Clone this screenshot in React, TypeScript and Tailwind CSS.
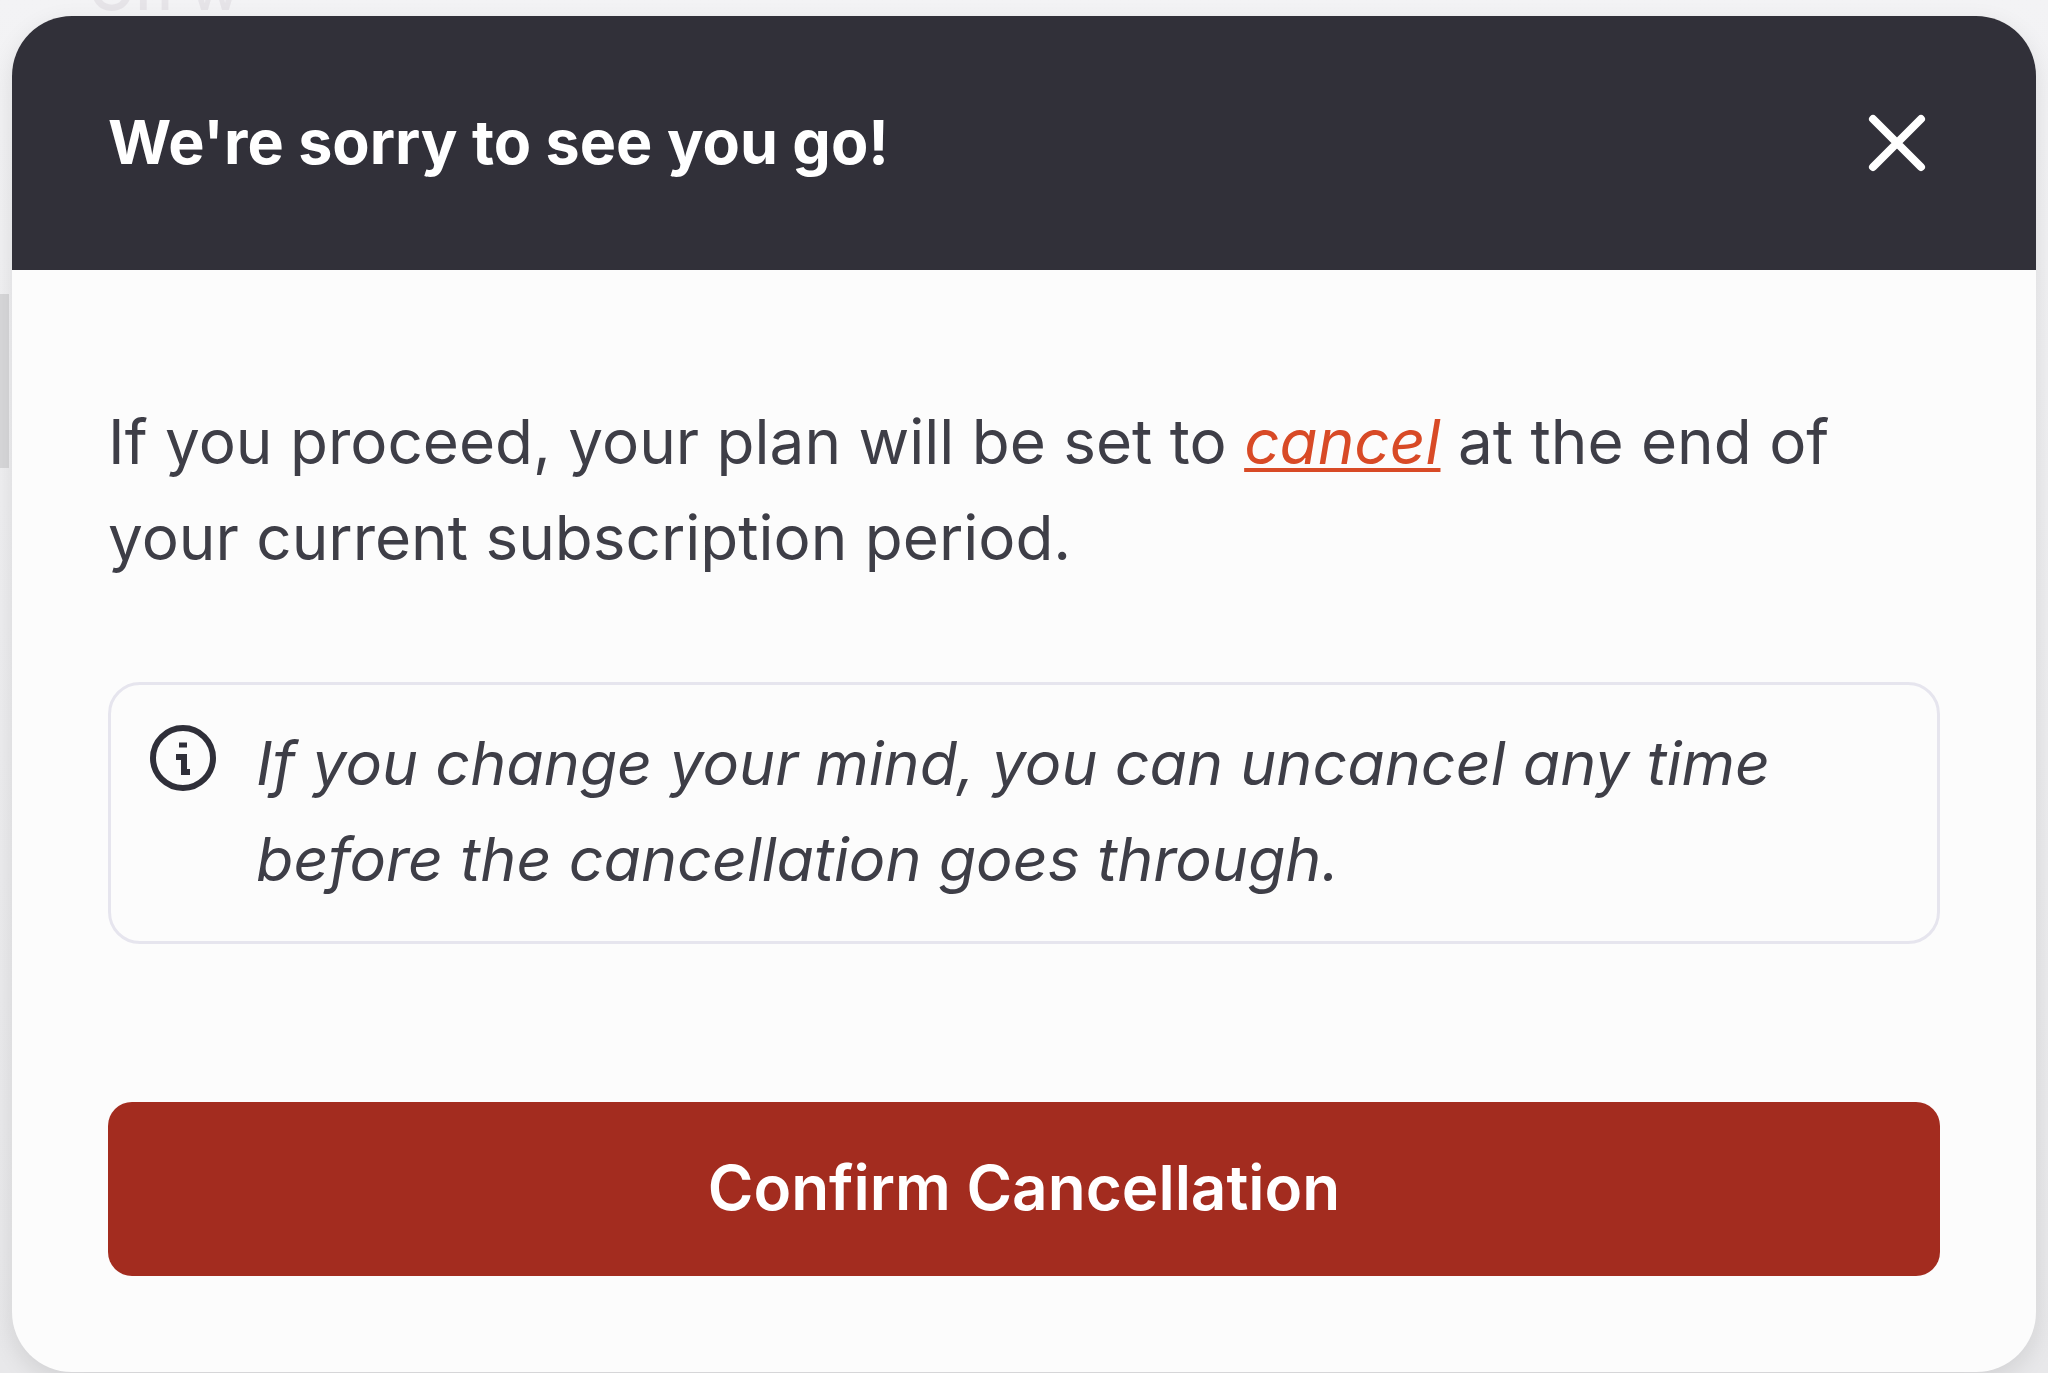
import React from "react";

function CloseIcon() {
  return (
    <svg viewBox="0 0 58 58" className="size-[58px]" fill="none" stroke="currentColor" strokeWidth="8" strokeLinecap="round" aria-hidden="true">
      <path d="M5 5 53 53M53 5 5 53" />
    </svg>
  );
}

function InfoIcon() {
  return (
    <svg viewBox="0 0 66 66" className="mt-2.5 size-[66px] shrink-0 text-[#2f2f39]" fill="none" stroke="currentColor" aria-hidden="true">
      <circle cx="33" cy="33" r="30" strokeWidth="6" />
      <path d="M26 32h8v15M31 47h9" strokeWidth="6" />
      <path d="M29 20h8" strokeWidth="5" />
    </svg>
  );
}

export default function App() {
  return (
    <div className="relative h-screen overflow-hidden bg-[#efeff2] font-['Inter',sans-serif] text-[#3e3e47]">
      <div aria-hidden="true" className="absolute top-0 left-0 h-full w-full bg-linear-to-b from-[#f3f3f5] to-[#e8e8ea]">
        <p className="absolute -top-[48px] left-[88px] text-[62px] leading-[72px] font-medium text-[#e6e4e8]">On w</p>
        <div className="absolute top-[294px] left-0 h-[174px] w-[9px] bg-[#d8d8da]" />
      </div>
      <main className="relative px-3 pt-4">
        <section role="dialog" aria-labelledby="title" className="overflow-hidden rounded-[60px] bg-[#fcfcfc] shadow-[0_8px_24px_rgba(0,0,0,0.1)]">
          <header className="flex h-[254px] items-center justify-between bg-[#313039] px-24 text-white">
            <h1 id="title" className="pb-0.5 text-[61px] leading-[96px] font-bold">We're sorry to see you go!</h1>
            <button type="button" aria-label="Close" className="mr-3.5">
              <CloseIcon />
            </button>
          </header>
          <div className="px-24 pt-[124px] pb-24">
            <p className="text-[62px] leading-[96px]">
              If you proceed, your plan will be set to{" "}
              <a href="#cancel" className="text-[#d84a26] italic underline decoration-4 underline-offset-4">cancel</a> at the end of your current subscription period.
            </p>
            <div className="mt-24 flex gap-10 rounded-[32px] border-3 border-[#e6e5ee] px-[39px] pt-[30px] pb-[34px]">
              <InfoIcon />
              <p className="text-[61px] leading-[96px] italic">
                If you change your mind, you can uncancel any time before the cancellation goes through.
              </p>
            </div>
            <button type="button" className="mt-[158px] flex h-[174px] w-full items-center justify-center rounded-3xl bg-[#a32c1f] pb-1 text-[62px] font-semibold text-white">
              Confirm Cancellation
            </button>
          </div>
        </section>
      </main>
    </div>
  );
}
